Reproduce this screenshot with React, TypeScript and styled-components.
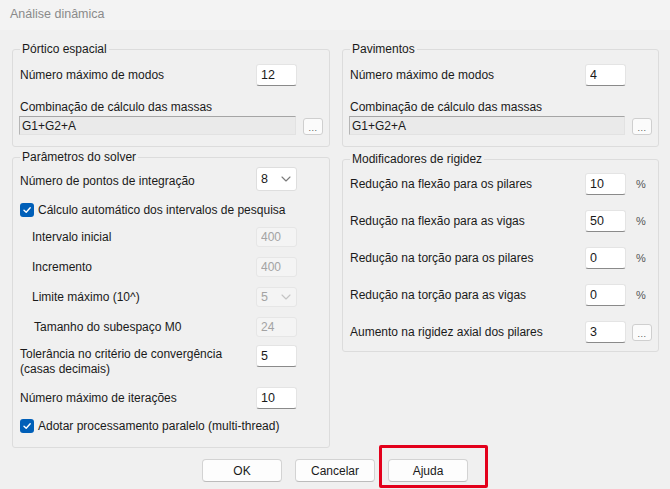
import React from "react";
import styled, { createGlobalStyle } from "styled-components";

const GlobalStyle = createGlobalStyle`
  html, body { margin: 0; padding: 0; background: #f0f0f0; }
  body {
    font-family: "Liberation Sans", Arial, sans-serif;
    font-size: 12px;
    color: #1a1a1a;
  }
  * { box-sizing: border-box; }
`;

const Dialog = styled.div`
  width: 670px;
  height: 489px;
  background: #f0f0f0;
  display: flex;
  flex-direction: column;
  overflow: hidden;
`;

const TitleBar = styled.div`
  height: 30px;
  padding: 7px 0 0 10px;
  line-height: 14px;
  font-size: 12.5px;
  color: #8a8a8a;
  background: #f3f3f3;
`;

const Body = styled.div`
  display: grid;
  grid-template-columns: 318px 317px;
  column-gap: 12px;
  padding: 12px 0 0 12px;
  align-items: start;
`;

const Column = styled.div<{ $gap: number }>`
  display: flex;
  flex-direction: column;
  gap: ${(p) => p.$gap}px;
`;

const GroupBox = styled.fieldset`
  margin: 0;
  padding: 0 6px 0 7px;
  border: 1px solid #dcdcdc;
  border-radius: 3px;
  min-width: 0;
`;

const Legend = styled.legend`
  padding: 0 2px;
  line-height: 14px;
  font-size: 12px;
  color: #1a1a1a;
`;

const GroupContent = styled.div<{ $top: number; $bottom: number; $gap?: number }>`
  display: flex;
  flex-direction: column;
  gap: ${(p) => p.$gap ?? 0}px;
  padding: ${(p) => p.$top}px 0 ${(p) => p.$bottom}px;
`;

const FieldRow = styled.div<{ $h: number; $mt?: number; $top?: boolean }>`
  display: grid;
  grid-template-columns: 1fr 41px 20px;
  column-gap: 6px;
  align-items: ${(p) => (p.$top ? "start" : "center")};
  height: ${(p) => p.$h}px;
  margin-top: ${(p) => p.$mt ?? 0}px;
`;

const Label = styled.span<{ $indent?: number; $drop?: number }>`
  padding-left: ${(p) => p.$indent ?? 0}px;
  padding-top: ${(p) => p.$drop ?? 0}px;
  white-space: nowrap;
  line-height: 14px;
`;

const MultiLabel = styled.span`
  padding-top: 2px;
  line-height: 15px;
`;

const Caption = styled.div<{ $mt: number }>`
  margin-top: ${(p) => p.$mt}px;
  line-height: 14px;
`;

const TextInput = styled.input`
  width: 41px;
  height: 22px;
  margin: 0;
  padding: 0 4px;
  border: 1px solid #e4e4e4;
  border-bottom: 1px solid #8a8a8a;
  border-radius: 3px;
  background: #ffffff;
  font: inherit;
  font-size: 12.5px;
  color: #1a1a1a;
  outline: none;
`;

const DisabledInput = styled.input`
  width: 41px;
  height: 20px;
  margin: 0;
  padding: 0 4px;
  border: 1px solid #e6e6e6;
  border-radius: 3px;
  background: #f4f4f4;
  font: inherit;
  color: #a3a3a3;
  outline: none;
`;

const ComboRow = styled.div<{ $mt: number }>`
  display: grid;
  grid-template-columns: 1fr 20px;
  column-gap: 6px;
  align-items: end;
  height: 19px;
  margin-top: ${(p) => p.$mt}px;
`;

const SunkenField = styled.input`
  width: 100%;
  height: 19px;
  margin: 0 0 0 -1px;
  padding: 0 2px;
  border: 1px solid #e2e2e2;
  border-top-color: #a5a5a5;
  border-left-color: #b5b5b5;
  background: #eaeaea;
  font: inherit;
  color: #1a1a1a;
  outline: none;
`;

const EllipsisButton = styled.button`
  width: 20px;
  height: 17px;
  margin: 0;
  padding: 0 0 2px;
  border: 1px solid #cfcfcf;
  border-radius: 3px;
  background: #fbfbfb;
  display: flex;
  align-items: flex-end;
  justify-content: center;
  font-family: inherit;
  font-size: 9px;
  line-height: 8px;
  color: #555555;
  letter-spacing: 0.5px;
`;

const Select = styled.div<{ $disabled?: boolean }>`
  width: 41px;
  height: ${(p) => (p.$disabled ? 20 : 24)}px;
  padding: 0 5px 0 4px;
  border: 1px solid ${(p) => (p.$disabled ? "#e6e6e6" : "#dedede")};
  border-radius: 3px;
  background: ${(p) => (p.$disabled ? "#f4f4f4" : "#ffffff")};
  color: ${(p) => (p.$disabled ? "#a3a3a3" : "#1a1a1a")};
  display: flex;
  align-items: center;
  justify-content: space-between;
  font-size: 12.5px;
`;

const Unit = styled.span`
  padding-left: 4px;
  font-size: 11px;
  color: #555555;
`;

const CheckRow = styled.label<{ $mt: number; $h: number }>`
  display: flex;
  align-items: center;
  gap: 4px;
  height: ${(p) => p.$h}px;
  margin-top: ${(p) => p.$mt}px;
  white-space: nowrap;
`;

const CheckBox = styled.span`
  width: 14px;
  height: 14px;
  border-radius: 3px;
  background: #005fb8;
  display: flex;
  align-items: center;
  justify-content: center;
  flex: none;
`;

const Footer = styled.div`
  display: flex;
  justify-content: center;
  gap: 13px;
  padding-top: 11px;
`;

const DialogButton = styled.button`
  width: 80px;
  height: 23px;
  margin: 0;
  padding: 0;
  border: 1px solid #d3d3d3;
  border-bottom-color: #bcbcbc;
  border-radius: 4px;
  background: #fdfdfd;
  font-family: inherit;
  font-size: 12px;
  color: #1a1a1a;
`;

const HighlightWrap = styled.span`
  position: relative;
  display: inline-flex;
`;

const Highlight = styled.span`
  position: absolute;
  left: -9px;
  right: -20px;
  top: -14px;
  bottom: -6px;
  border: 3px solid #e3001b;
  border-radius: 2px;
  pointer-events: none;
`;

const Chevron = ({ color }: { color: string }) => (
  <svg width="10" height="6" viewBox="0 0 10 6" fill="none">
    <path d="M1 1 L5 5 L9 1" stroke={color} strokeWidth="1.1" strokeLinecap="round" strokeLinejoin="round" />
  </svg>
);

const Check = () => (
  <CheckBox>
    <svg width="10" height="10" viewBox="0 0 10 10" fill="none">
      <path d="M2 5.2 L4.2 7.3 L8.2 2.8" stroke="#ffffff" strokeWidth="1.4" strokeLinecap="round" strokeLinejoin="round" />
    </svg>
  </CheckBox>
);

const MassGroup = ({ title, modes }: { title: string; modes: string }) => (
  <GroupBox>
    <Legend>{title}</Legend>
    <GroupContent $top={8} $bottom={11}>
      <FieldRow $h={22}>
        <Label>Número máximo de modos</Label>
        <TextInput defaultValue={modes} />
      </FieldRow>
      <Caption $mt={14}>Combinação de cálculo das massas</Caption>
      <ComboRow $mt={2}>
        <SunkenField readOnly defaultValue="G1+G2+A" />
        <EllipsisButton>...</EllipsisButton>
      </ComboRow>
    </GroupContent>
  </GroupBox>
);

const disabledRows = [
  { label: "Intervalo inicial", value: "400", indent: 12 },
  { label: "Incremento", value: "400", indent: 12 },
];

const modifiers = [
  { label: "Redução na flexão para os pilares", value: "10" },
  { label: "Redução na flexão para as vigas", value: "50" },
  { label: "Redução na torção para os pilares", value: "0" },
  { label: "Redução na torção para as vigas", value: "0" },
];

export default function App() {
  return (
    <>
      <GlobalStyle />
      <Dialog>
        <TitleBar>Análise dinâmica</TitleBar>
        <Body>
          <Column $gap={3}>
            <MassGroup title="Pórtico espacial" modes="12" />
            <GroupBox>
              <Legend>Parâmetros do solver</Legend>
              <GroupContent $top={3} $bottom={14}>
                <FieldRow $h={24}>
                  <Label $drop={4}>Número de pontos de integração</Label>
                  <Select>
                    <span>8</span>
                    <Chevron color="#7a7a7a" />
                  </Select>
                </FieldRow>
                <CheckRow $mt={11} $h={16}>
                  <Check />
                  <span>Cálculo automático dos intervalos de pesquisa</span>
                </CheckRow>
                {disabledRows.map((r, i) => (
                  <FieldRow key={r.label} $h={30} $mt={i === 0 ? 4 : 0}>
                    <Label $indent={r.indent}>{r.label}</Label>
                    <DisabledInput disabled defaultValue={r.value} />
                  </FieldRow>
                ))}
                <FieldRow $h={30}>
                  <Label $indent={12}>Limite máximo (10^)</Label>
                  <Select $disabled>
                    <span>5</span>
                    <Chevron color="#c4c4c4" />
                  </Select>
                </FieldRow>
                <FieldRow $h={30}>
                  <Label $indent={14}>Tamanho do subespaço M0</Label>
                  <DisabledInput disabled defaultValue="24" />
                </FieldRow>
                <FieldRow $h={32} $mt={3} $top>
                  <MultiLabel>
                    Tolerância no critério de convergência
                    <br />
                    (casas decimais)
                  </MultiLabel>
                  <TextInput defaultValue="5" />
                </FieldRow>
                <FieldRow $h={22} $mt={10}>
                  <Label>Número máximo de iterações</Label>
                  <TextInput defaultValue="10" />
                </FieldRow>
                <CheckRow $mt={10} $h={14}>
                  <Check />
                  <span>Adotar processamento paralelo (multi-thread)</span>
                </CheckRow>
              </GroupContent>
            </GroupBox>
          </Column>
          <Column $gap={5}>
            <MassGroup title="Pavimentos" modes="4" />
            <GroupBox>
              <Legend>Modificadores de rigidez</Legend>
              <GroupContent $top={7} $bottom={8} $gap={15}>
                {modifiers.map((m) => (
                  <FieldRow key={m.label} $h={22}>
                    <Label>{m.label}</Label>
                    <TextInput defaultValue={m.value} />
                    <Unit>%</Unit>
                  </FieldRow>
                ))}
                <FieldRow $h={22}>
                  <Label>Aumento na rigidez axial dos pilares</Label>
                  <TextInput defaultValue="3" />
                  <EllipsisButton>...</EllipsisButton>
                </FieldRow>
              </GroupContent>
            </GroupBox>
          </Column>
        </Body>
        <Footer>
          <DialogButton>OK</DialogButton>
          <DialogButton>Cancelar</DialogButton>
          <HighlightWrap>
            <DialogButton>Ajuda</DialogButton>
            <Highlight />
          </HighlightWrap>
        </Footer>
      </Dialog>
    </>
  );
}
